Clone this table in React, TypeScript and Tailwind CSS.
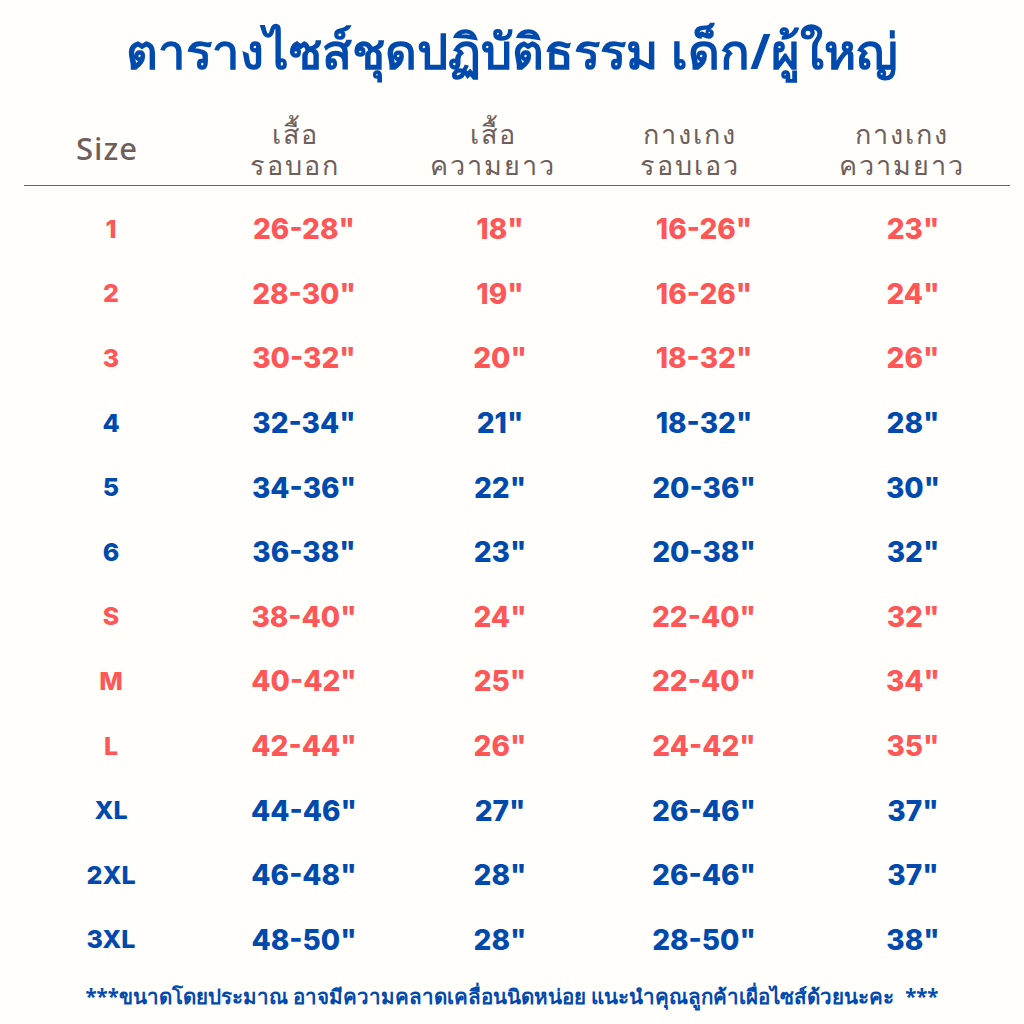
const rows: { s: string; a: string; b: string; c: string; d: string; red: boolean }[] = [
  { s: "1", a: '26-28"', b: '18"', c: '16-26"', d: '23"', red: true },
  { s: "2", a: '28-30"', b: '19"', c: '16-26"', d: '24"', red: true },
  { s: "3", a: '30-32"', b: '20"', c: '18-32"', d: '26"', red: true },
  { s: "4", a: '32-34"', b: '21"', c: '18-32"', d: '28"', red: false },
  { s: "5", a: '34-36"', b: '22"', c: '20-36"', d: '30"', red: false },
  { s: "6", a: '36-38"', b: '23"', c: '20-38"', d: '32"', red: false },
  { s: "S", a: '38-40"', b: '24"', c: '22-40"', d: '32"', red: true },
  { s: "M", a: '40-42"', b: '25"', c: '22-40"', d: '34"', red: true },
  { s: "L", a: '42-44"', b: '26"', c: '24-42"', d: '35"', red: true },
  { s: "XL", a: '44-46"', b: '27"', c: '26-46"', d: '37"', red: false },
  { s: "2XL", a: '46-48"', b: '28"', c: '26-46"', d: '37"', red: false },
  { s: "3XL", a: '48-50"', b: '28"', c: '28-50"', d: '38"', red: false },
];

export default function App() {
  return (
    <div className="w-[1024px] h-[1024px] bg-[#fffefa] flex flex-col font-['Noto_Sans','Liberation_Sans',sans-serif] overflow-hidden">
      <h1 className="h-[112px] flex items-center justify-center text-[49px] font-bold text-[#0049ad] leading-none pb-3">
        ตารางไซส์ชุดปฏิบัติธรรม เด็ก/ผู้ใหญ่
      </h1>

      <div className="ml-[24px] mr-[14px] border-b-[1.5px] border-[#6e5f5c] h-[74px] grid grid-cols-[166px_210px_186px_208px_216px] items-center text-[#6e5f5c] text-[27px] leading-[31px] tracking-[2px] font-medium text-center">
        <div className="text-[31px] tracking-[1px]">Size</div>
        <div>เสื้อ<br />รอบอก</div>
        <div>เสื้อ<br />ความยาว</div>
        <div>กางเกง<br />รอบเอว</div>
        <div>กางเกง<br />ความยาว</div>
      </div>

      <div className="flex flex-col pt-[11px] font-['Inter','Liberation_Sans',sans-serif] font-extrabold text-[28px] leading-none">
        {rows.map((r, i) => (
          <div
            key={i}
            className={`h-[64.6px] grid grid-cols-[222px_164px_228px_180px_238px] items-center text-center ${r.red ? "text-[#ff5757]" : "text-[#0049ad]"}`}
          >
            <div className="text-[25px]">{r.s}</div>
            <div>{r.a}</div>
            <div>{r.b}</div>
            <div>{r.c}</div>
            <div>{r.d}</div>
          </div>
        ))}
      </div>

      <div className="flex-1 flex items-center justify-center text-[#0049ad] text-[20.5px] font-bold pb-1">
        ***ขนาดโดยประมาณ อาจมีความคลาดเคลื่อนนิดหน่อย แนะนำคุณลูกค้าเผื่อไซส์ด้วยนะคะ&nbsp;&nbsp;***
      </div>
    </div>
  );
}
